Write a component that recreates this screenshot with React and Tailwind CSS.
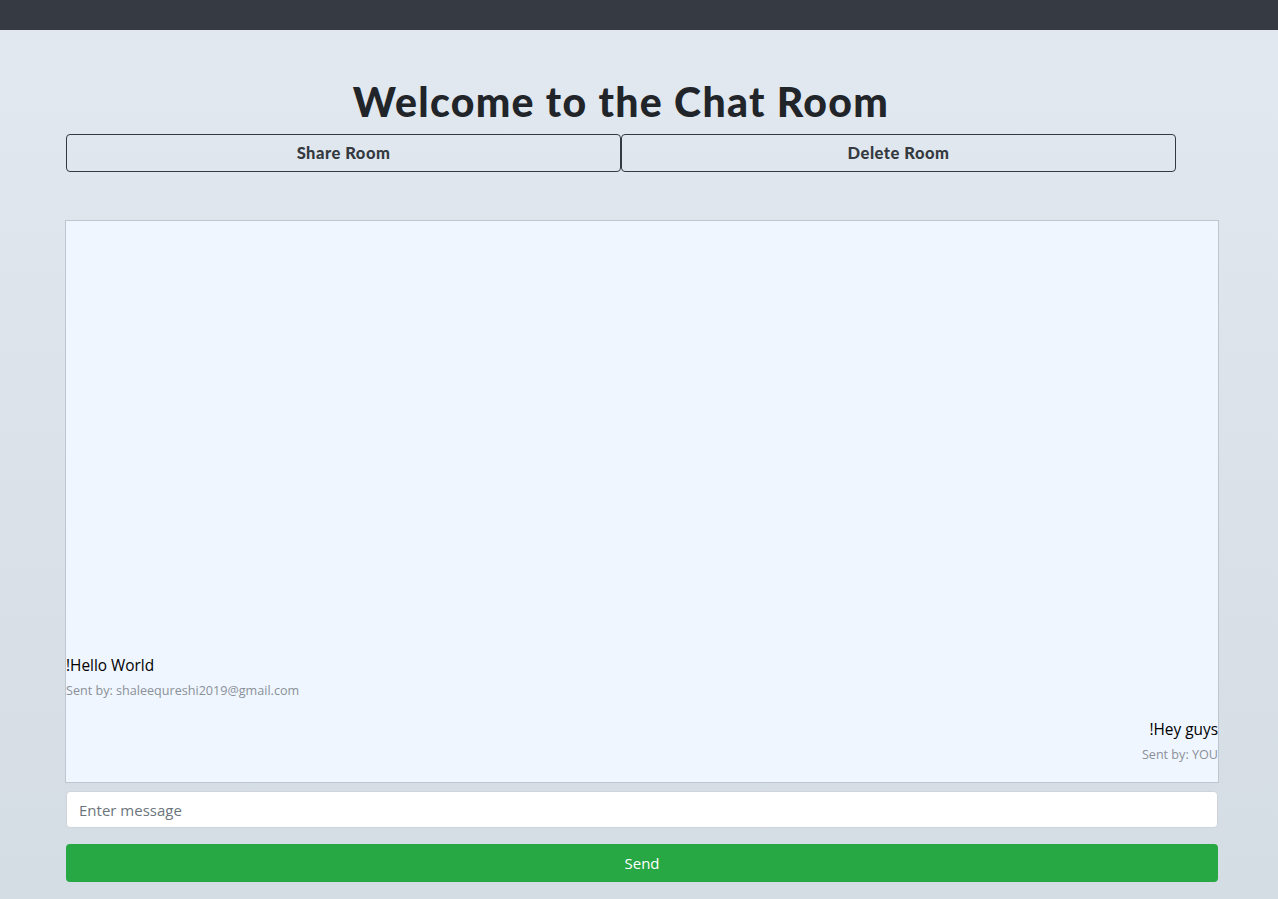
import React from "react";

const messages = [
  { text: "!Hello World", sender: "shaleequreshi2019@gmail.com", mine: false },
  { text: "!Hey guys", sender: "YOU", mine: true }
];

function Message({ text, sender, mine }) {
  return (
    <div className={mine ? "pb-[17px] text-right" : "pb-[17px] text-left"}>
      <p className="text-[15.4px] leading-6 text-black">{text}</p>
      <p className="mt-[3px] text-[12.6px] leading-[20px] text-[#8a9098]">Sent by: {sender}</p>
    </div>
  );
}

export default function App() {
  return (
    <div
      className="min-h-screen bg-gradient-to-b from-[#e2e9f0] to-[#d4dce4]"
      style={{ fontFamily: '"Open Sans", "Liberation Sans", sans-serif' }}
    >
      <div className="h-[30px] bg-[#353a43]" />

      <div className="pt-[48px]">
        <div className="ml-[66px] w-[1110px]">
          <h1 className="text-center text-[41px] leading-[48px] font-black tracking-[1.3px] text-[#212529] font-['Lato',sans-serif]">
            Welcome to the Chat Room
          </h1>
          <div className="mt-2 flex">
            <button className="h-[38px] flex-1 rounded-[4px] border border-[#343a40] text-[16.5px] font-black tracking-[0.5px] text-[#343a40] font-['Lato',sans-serif]">
              Share Room
            </button>
            <button className="h-[38px] flex-1 rounded-[4px] border border-[#343a40] text-[16.5px] font-black tracking-[0.5px] text-[#343a40] font-['Lato',sans-serif]">
              Delete Room
            </button>
          </div>
        </div>

        <div className="ml-[65px] mt-[48px] w-[1154px] pb-[17px]">
          <div className="flex h-[563px] flex-col justify-end border border-[#bfc6ce] bg-[#eff6ff]">
            {messages.map((m, i) => (
              <Message key={i} {...m} />
            ))}
          </div>
          <input
            placeholder="Enter message"
            className="ml-[1px] mt-[8px] block h-[37px] w-[1152px] rounded-[4px] border border-[#ced4da] bg-white px-3 text-[15px] text-[#495057] placeholder:text-[#6c757d] outline-none"
          />
          <button className="ml-[1px] mt-4 block h-[38px] w-[1152px] rounded-[4px] bg-[#28a745] text-[15px] text-white">
            Send
          </button>
        </div>
      </div>
    </div>
  );
}
